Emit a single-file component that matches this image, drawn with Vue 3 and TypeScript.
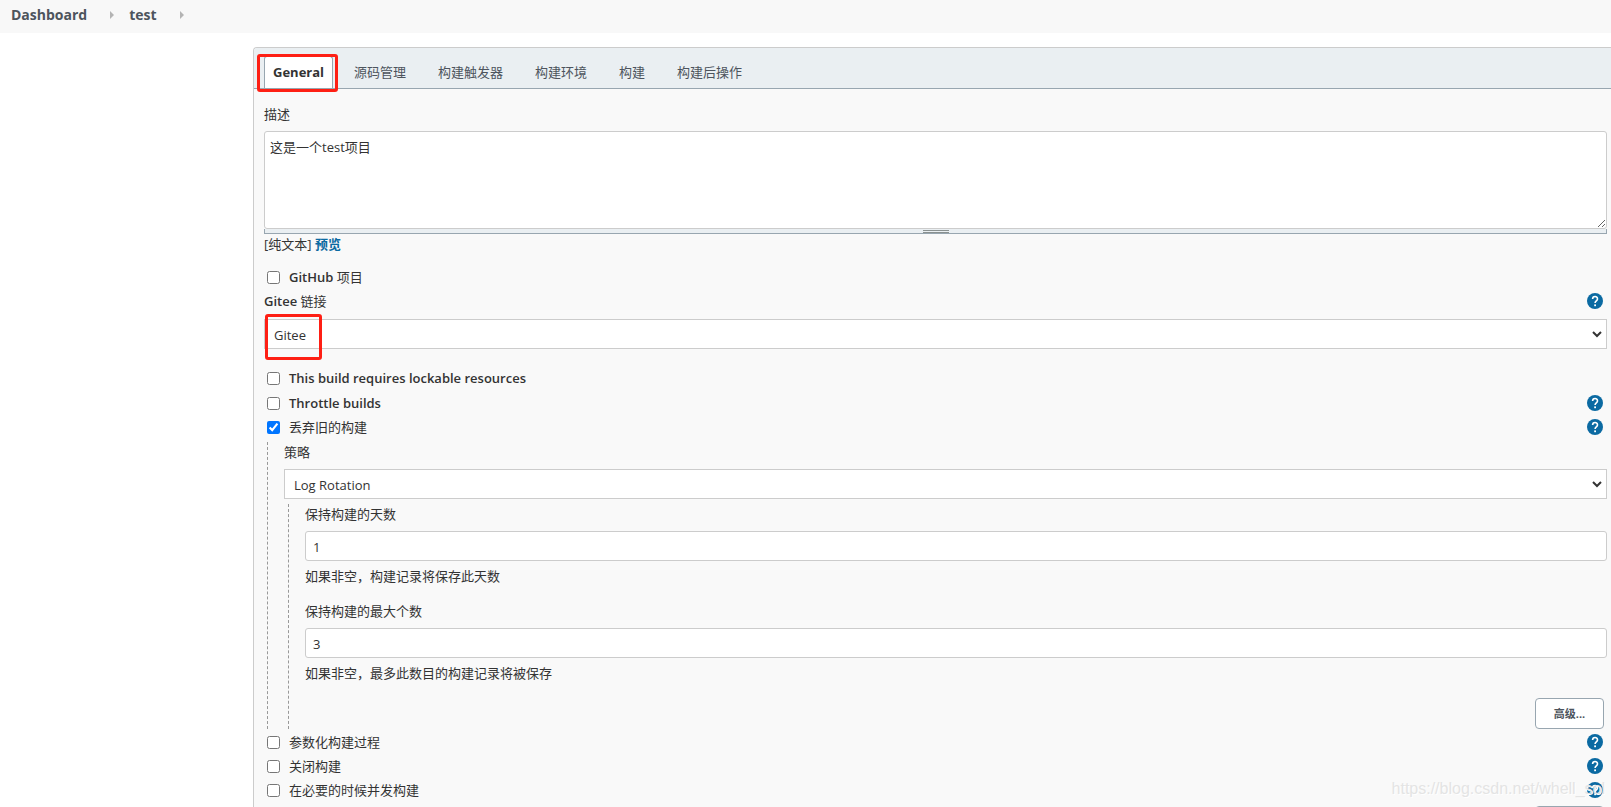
<script setup lang="ts">
import { ref } from 'vue'

interface Option {
  id: string
  en?: string
  zh?: string
  help: boolean
}

const crumbs = ['Dashboard', 'test']
const tabs = ['General', '源码管理', '构建触发器', '构建环境', '构建', '构建后操作']
const activeTab = ref('General')

const description = ref('这是一个test项目')
const connection = ref('Gitee')
const strategy = ref('Log Rotation')
const days = ref('1')
const count = ref('3')
const checked = ref<string[]>(['discard'])

const upper: Option[] = [
  { id: 'lockable', en: 'This build requires lockable resources', help: false },
  { id: 'throttle', en: 'Throttle builds', help: true },
]
const discard: Option[] = [{ id: 'discard', zh: '丢弃旧的构建', help: true }]
const github: Option[] = [{ id: 'github', en: 'GitHub', zh: '项目', help: false }]
const lower: Option[] = [
  { id: 'params', zh: '参数化构建过程', help: true },
  { id: 'disable', zh: '关闭构建', help: true },
  { id: 'concurrent', zh: '在必要的时候并发构建', help: true },
]
const groups = { github, upper, discard, lower }
</script>

<template>
  <div class="page">
    <nav class="crumbs" aria-label="breadcrumb">
      <template v-for="c in crumbs" :key="c">
        <a href="#">{{ c }}</a>
        <svg class="sep" viewBox="0 0 4 8" aria-hidden="true"><path d="M0 0L4 4L0 8Z" /></svg>
      </template>
    </nav>

    <form class="panel" @submit.prevent>
      <div class="tabs" role="tablist">
        <button
          v-for="t in tabs"
          :key="t"
          type="button"
          role="tab"
          class="tab"
          :class="{ active: t === activeTab }"
          :aria-selected="t === activeTab"
          @click="activeTab = t"
        >
          {{ t }}
          <span v-if="t === 'General'" class="mark mark-tab"></span>
        </button>
      </div>

      <div class="body">
        <label class="label first" for="desc">描述</label>
        <textarea id="desc" v-model="description"></textarea>
        <div class="handle"><span></span></div>
        <div class="format">[纯文本] <a href="#">预览</a></div>

        <div v-for="o in groups.github" :key="o.id" class="row">
          <input :id="o.id" v-model="checked" type="checkbox" :value="o.id" />
          <label :for="o.id"><b>{{ o.en }}</b> {{ o.zh }}</label>
        </div>

        <div class="row">
          <label class="flush" for="conn"><b>Gitee</b> 链接</label>
          <button type="button" class="help" aria-label="Help">
            <svg viewBox="0 0 16 16"><circle cx="8" cy="8" r="8" /><path d="M5.6 6.1C5.6 2.7 10.5 2.8 10.5 5.9C10.5 7.8 8.1 7.9 8.1 10" /><rect x="7.2" y="11.4" width="1.8" height="1.8" /></svg>
          </button>
        </div>
        <div class="select connection">
          <select id="conn" v-model="connection"><option>Gitee</option></select>
          <svg class="arrow" viewBox="0 0 10 7" aria-hidden="true"><path d="M1 1L5 5L9 1" /></svg>
          <span class="mark mark-select"></span>
        </div>

        <div class="upper">
          <div v-for="o in groups.upper" :key="o.id" class="row">
            <input :id="o.id" v-model="checked" type="checkbox" :value="o.id" />
            <label :for="o.id"><b>{{ o.en }}</b></label>
            <button v-if="o.help" type="button" class="help" aria-label="Help">
              <svg viewBox="0 0 16 16"><circle cx="8" cy="8" r="8" /><path d="M5.6 6.1C5.6 2.7 10.5 2.8 10.5 5.9C10.5 7.8 8.1 7.9 8.1 10" /><rect x="7.2" y="11.4" width="1.8" height="1.8" /></svg>
            </button>
          </div>
        </div>

        <div v-for="o in groups.discard" :key="o.id" class="row">
          <input :id="o.id" v-model="checked" type="checkbox" :value="o.id" />
          <label :for="o.id">{{ o.zh }}</label>
          <button type="button" class="help" aria-label="Help">
            <svg viewBox="0 0 16 16"><circle cx="8" cy="8" r="8" /><path d="M5.6 6.1C5.6 2.7 10.5 2.8 10.5 5.9C10.5 7.8 8.1 7.9 8.1 10" /><rect x="7.2" y="11.4" width="1.8" height="1.8" /></svg>
          </button>
        </div>

        <div class="nested outer">
          <label class="label" for="strategy">策略</label>
          <div class="select">
            <select id="strategy" v-model="strategy"><option>Log Rotation</option></select>
            <svg class="arrow" viewBox="0 0 10 7" aria-hidden="true"><path d="M1 1L5 5L9 1" /></svg>
          </div>
          <div class="nested inner">
            <label class="label" for="days">保持构建的天数</label>
            <input id="days" v-model="days" class="text" type="text" />
            <p class="hint">如果非空，构建记录将保存此天数</p>
            <label class="label" for="count">保持构建的最大个数</label>
            <input id="count" v-model="count" class="text" type="text" />
            <p class="hint">如果非空，最多此数目的构建记录将被保存</p>
            <div class="actions"><button type="button" class="advanced">高级...</button></div>
          </div>
        </div>

        <div v-for="o in groups.lower" :key="o.id" class="row">
          <input :id="o.id" v-model="checked" type="checkbox" :value="o.id" />
          <label :for="o.id">{{ o.zh }}</label>
          <button type="button" class="help" aria-label="Help">
            <svg viewBox="0 0 16 16"><circle cx="8" cy="8" r="8" /><path d="M5.6 6.1C5.6 2.7 10.5 2.8 10.5 5.9C10.5 7.8 8.1 7.9 8.1 10" /><rect x="7.2" y="11.4" width="1.8" height="1.8" /></svg>
          </button>
        </div>
        <div class="actions last"><button type="button" class="advanced" aria-label="高级"></button></div>
      </div>
    </form>

    <div class="watermark">https://blog.csdn.net/whell_sol</div>
  </div>
</template>

<style>
body {
  background: #fff;
}
</style>

<style scoped>
.page,
.page * {
  box-sizing: border-box;
}
.page {
  position: relative;
  display: flex;
  flex-direction: column;
  height: 100vh;
  overflow: hidden;
  color: #333;
  font: 13px/20px "Open Sans", "Noto Sans CJK SC", sans-serif;
}
button,
input,
select,
textarea {
  margin: 0;
  color: inherit;
  font: inherit;
}
b {
  font-weight: 600;
}
.crumbs {
  display: flex;
  flex: none;
  align-items: center;
  height: 33px;
  padding: 0 11px 4px;
  background: #f8f8f8;
}
.crumbs a {
  color: #4d545d;
  font-size: 14px;
  font-weight: 700;
  text-decoration: none;
}
.sep {
  width: 4px;
  height: 8px;
  margin: 0 15px 0 23px;
  fill: #b4b4b4;
}
.panel {
  flex: 1 0 auto;
  margin: 14px 0 0 253px;
  border: 1px solid #ccc;
  border-right: 0;
  border-bottom: 0;
  border-radius: 4px 0 0 0;
  background: #f9f9f9;
}
.tabs {
  display: flex;
  align-items: flex-end;
  height: 41px;
  padding-left: 10px;
  border-bottom: 1px solid #98a6b0;
  border-radius: 3px 0 0 0;
  background: #eaeff2;
}
.tab {
  position: relative;
  height: 32px;
  margin-right: 10px;
  padding: 0 10px 2px;
  border: 1px solid transparent;
  border-bottom: 0;
  background: none;
  color: #4d545d;
  white-space: nowrap;
}
.tab.active {
  padding: 0 8px 2px;
  border-color: #98a6b0;
  border-radius: 3px 3px 0 0;
  background: #fff;
  color: #333;
  font-weight: 700;
}
.mark {
  position: absolute;
  border: 3px solid #fe1f14;
  border-radius: 3px;
  pointer-events: none;
}
.mark-tab {
  inset: -3px -6px -4px -8px;
}
.mark-select {
  top: -5px;
  left: 1px;
  width: 57px;
  height: 46px;
}
.body {
  padding: 0 4px 0 10px;
}
.label {
  display: block;
  height: 20px;
  margin-bottom: 7px;
}
.first {
  margin-top: 15px;
}
textarea {
  display: block;
  width: 100%;
  height: 98px;
  padding: 5px;
  border: 1px solid #ccc;
  border-radius: 3px;
  background: #fff;
  resize: vertical;
}
.handle {
  display: flex;
  align-items: center;
  justify-content: center;
  height: 5px;
  border: 1px solid #98a6b0;
  border-top: 0;
  background: #eaeff2;
}
.handle span {
  width: 26px;
  height: 3px;
  border: solid #8a9190;
  border-width: 1px 0;
}
.format {
  margin-bottom: 11px;
}
.format a {
  color: #0b6aa2;
  font-weight: 700;
  text-decoration: none;
}
.row {
  display: flex;
  align-items: center;
  height: 24px;
  padding: 0 4px 0 3px;
}
.row input {
  width: 13px;
  height: 13px;
  margin-right: 9px;
}
.row .flush {
  margin-left: -3px;
}
.help {
  display: block;
  width: 16px;
  height: 16px;
  margin-left: auto;
  padding: 0;
  border: 0;
  background: none;
}
.help svg {
  display: block;
  fill: #0b6aa2;
}
.help path {
  fill: none;
  stroke: #fff;
  stroke-width: 1.6;
}
.help rect {
  fill: #fff;
}
.select {
  position: relative;
}
.connection {
  margin: 6px 0 17px;
}
select {
  display: block;
  width: 100%;
  height: 30px;
  padding: 2px 9px 0;
  border: 1px solid #ccc;
  border-radius: 0;
  background: #fff;
  appearance: none;
}
.arrow {
  position: absolute;
  top: 12px;
  right: 5px;
  width: 10px;
  height: 7px;
  fill: none;
  stroke: #333;
  stroke-width: 2;
  pointer-events: none;
}
.upper {
  display: grid;
  gap: 1px;
}
.nested {
  padding-left: 16px;
  border-left: 1px dashed #999;
}
.outer {
  margin: 3px 0 1px 3px;
}
.inner {
  margin: 5px 0 0 4px;
}
.text {
  display: block;
  width: 100%;
  height: 30px;
  padding: 2px 7px 0;
  border: 1px solid #ccc;
  border-radius: 3px;
  background: #fff;
}
.hint {
  margin: 5px 0 15px;
}
.actions {
  display: flex;
  justify-content: flex-end;
  padding-right: 3px;
}
.advanced {
  width: 69px;
  height: 31px;
  border: 1px solid #98a6b0;
  border-radius: 4px;
  background: #fff;
  color: #4d545d;
  font-size: 11px;
  font-weight: 700;
}
.last {
  margin-top: 4px;
}
.watermark {
  position: absolute;
  right: 6px;
  bottom: 8px;
  color: #e4e4e4;
  font: 16px/20px "Liberation Sans", sans-serif;
  text-shadow: 1px 1px 0 #fff;
  pointer-events: none;
}
</style>
